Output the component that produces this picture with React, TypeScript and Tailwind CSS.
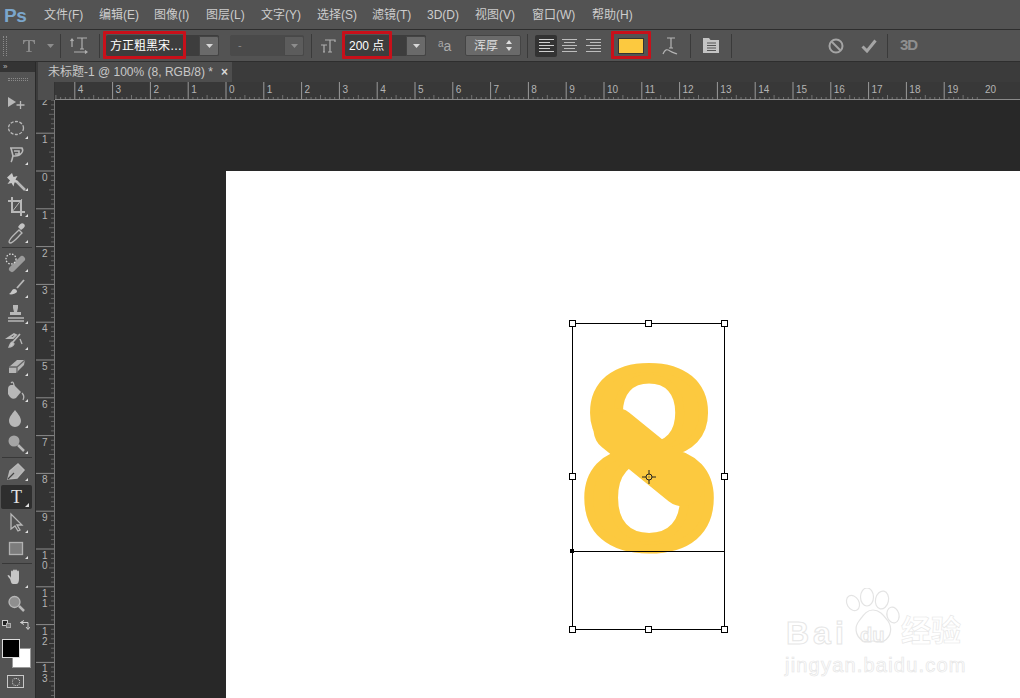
import type { ReactNode } from "react";

const menus = [
  { label: "文件(F)", w: "w-[55px]" },
  { label: "编辑(E)", w: "w-[55px]" },
  { label: "图像(I)", w: "w-[52px]" },
  { label: "图层(L)", w: "w-[55px]" },
  { label: "文字(Y)", w: "w-[56px]" },
  { label: "选择(S)", w: "w-[55px]" },
  { label: "滤镜(T)", w: "w-[55px]" },
  { label: "3D(D)", w: "w-[48px]" },
  { label: "视图(V)", w: "w-[57px]" },
  { label: "窗口(W)", w: "w-[60px]" },
  { label: "帮助(H)", w: "w-[50px]" },
];

const hLabels = ["4", "3", "2", "1", "0", ...Array.from({ length: 20 }, (_, i) => String(i + 1))];
const vLabels = ["2", "1", "0", ...Array.from({ length: 13 }, (_, i) => String(i + 1))];

function Sep({ className }: { className: string }) {
  return <div className={`w-px h-[24px] bg-[#3a3a3a] shrink-0 ${className}`} />;
}

function Caret() {
  return (
    <svg width="7" height="4" viewBox="0 0 7 4" className="shrink-0">
      <path d="M0 0h7L3.5 4z" fill="#d8d8d8" />
    </svg>
  );
}

function DropButton() {
  return (
    <div className="w-[20px] h-[20px] flex items-center justify-center bg-[#6a6a6a] rounded-r-[2px] border border-[#444]">
      <Caret />
    </div>
  );
}

function Tool({ children, corner = true }: { children: ReactNode; corner?: boolean }) {
  return (
    <div className="h-[26px] w-[36px] shrink-0">
      <svg width="36" height="26" viewBox="0 0 36 26" fill="none" stroke="#b8b8b8" strokeWidth="1.3">
        {children}
        {corner && <path d="M25 23h3v-3z" fill="#e0e0e0" stroke="none" />}
      </svg>
    </div>
  );
}

function ToolSep({ className }: { className: string }) {
  return (
    <div className={`shrink-0 flex items-center ${className}`}>
      <div className="h-px w-[30px] ml-[2px] bg-[#383838]" />
    </div>
  );
}

function Handle({ className }: { className: string }) {
  return <div className={`absolute w-[7px] h-[7px] bg-white border border-black ${className}`} />;
}

function HRuler() {
  return (
    <div className="relative h-[18px] flex-1 bg-[#383838] overflow-hidden border-b border-[#8a8a8a] flex">
      <svg width="965" height="18" className="absolute left-0 top-0">
        {Array.from({ length: 200 }, (_, i) => {
          const x = 19.8 - 37.8 + i * 4.725;
          const major = i % 8 === 0;
          const mid = i % 4 === 0;
          return <line key={i} x1={x} x2={x} y1={major ? 0 : mid ? 13 : 15} y2={17} stroke={major ? "#9a9a9a" : "#727272"} strokeWidth="1" />;
        })}
      </svg>
      <div className="w-[19.8px] shrink-0" />
      {hLabels.map((l, i) => (
        <div key={i} className="w-[37.8px] shrink-0 pl-[3px] pt-[2px] text-[10px] leading-[11px] text-[#b4b4b4] relative">
          {l}
        </div>
      ))}
    </div>
  );
}

function VRuler() {
  return (
    <div className="relative w-[19px] shrink-0 bg-[#333333] overflow-hidden border-r border-[#777]">
      <svg width="19" height="600" className="absolute left-0 top-0">
        {Array.from({ length: 130 }, (_, i) => {
          const y = 71 - 75.6 + i * 4.725;
          const major = i % 8 === 0;
          const mid = i % 4 === 0;
          return <line key={i} x1={major ? 0 : mid ? 13 : 15} x2={19} y1={y} y2={y} stroke={major ? "#8c8c8c" : "#666666"} strokeWidth="1" />;
        })}
      </svg>
      <div className="-mt-[4.6px] flex flex-col">
        {vLabels.map((l, i) => (
          <div key={i} className="h-[37.8px] shrink-0 pl-[6px] pt-[2px] text-[10px] leading-[10px] text-[#b4b4b4] relative">
            {l.split("").map((d, j) => (
              <div key={j}>{d}</div>
            ))}
          </div>
        ))}
      </div>
    </div>
  );
}

function Watermark() {
  return (
    <div className="absolute left-[557px] top-[417px] w-[190px] h-[92px] text-transparent font-bold [-webkit-text-stroke:1px_#e6e6e6] font-['Liberation_Sans','Noto_Sans_CJK_SC',sans-serif]">
      <svg width="110" height="62" viewBox="0 0 110 62" fill="none" stroke="#e4e4e4" strokeWidth="1.2" className="absolute left-[52px] top-0">
        <ellipse cx="18" cy="15" rx="6" ry="8" transform="rotate(-30 18 15)" />
        <ellipse cx="32" cy="9" rx="6.500" ry="9" />
        <ellipse cx="47" cy="12" rx="6.500" ry="9" transform="rotate(12 47 12)" />
        <ellipse cx="58" cy="27" rx="6" ry="8" transform="rotate(-15 58 27)" />
        <path d="M38 22c-7 0-10 6-14 11-4 5-5 14 4 20 5 2 6 0 10 0s6 2 11 0c8-5 8-14 4-20-4-5-8-11-15-11z" />
      </svg>
      <div className="absolute left-[3px] top-[29px] text-[32px] leading-[32px] tracking-[4px]">Bai</div>
      <div className="absolute left-[77px] top-[37px] text-[20px] leading-[20px]">du</div>
      <div className="absolute left-[118px] top-[27px] text-[30px] leading-[32px] [-webkit-text-stroke:0.6px_#e6e6e6]">经验</div>
      <div className="absolute left-[2px] top-[65px] text-[20px] leading-[24px] font-normal tracking-[1.2px] [-webkit-text-stroke:0.7px_#e6e6e6]">jingyan.baidu.com</div>
    </div>
  );
}

export default function App() {
  return (
    <div className="relative w-[1020px] h-[698px] overflow-hidden flex flex-col bg-[#535353] text-[#cfcfcf] font-['Liberation_Sans','Noto_Sans_CJK_SC',sans-serif]">
      {/* menu bar */}
      <div className="h-[28px] shrink-0 flex items-center pt-px border-b border-[#2e2e2e] box-content">
        <div className="w-[44px] pl-[4px] text-[19px] leading-none font-bold tracking-[-0.5px] text-[#7ba6cc]">Ps</div>
        {menus.map((m) => (
          <div key={m.label} className={`${m.w} shrink-0 text-[12px] text-[#cdcdcd]`}>
            {m.label}
          </div>
        ))}
      </div>

      {/* options bar */}
      <div className="h-[32px] shrink-0 flex items-center border-b border-[#2e2e2e] bg-[#535353]">
        <div className="ml-[3px] w-[4px] h-[20px] border-x border-dotted border-[#8a8a8a]" />
        <svg width="14" height="14" viewBox="0 0 14 14" className="ml-[15px] shrink-0" fill="#8a8a8a">
          <path d="M1 1h12v4h-1c0-2-1-3-3-3H8v10l2 .5V13H4v-.5L6 12V2H5C3 2 2 3 2 5H1z" />
        </svg>
        <svg width="7" height="4" viewBox="0 0 7 4" className="ml-[11px] shrink-0"><path d="M0 0h7L3.5 4z" fill="#8d8d8d" /></svg>
        <Sep className="ml-[6px]" />
        <svg width="18" height="20" viewBox="0 0 18 20" className="ml-[9px] shrink-0" fill="none" stroke="#b0b0b0">
          <path d="M7 2h10M12 2v11M10 13h4M2 3v8M0.5 5 2 3l1.5 2M4 16h13M15 14.500l2 1.500-2 1.500" strokeWidth="1.2" />
        </svg>
        <Sep className="ml-[11px]" />
        {/* font family */}
        <div className="relative ml-[6px] w-[113px] h-[21px] flex items-center bg-[#3d3d3d] rounded-[2px]">
          <div className="flex-1 pl-[4px] text-[12px] text-white whitespace-nowrap">方正粗黑宋…</div>
          <DropButton />
        </div>
        {/* font style */}
        <div className="ml-[11px] w-[74px] h-[21px] flex items-center bg-[#4a4a4a] rounded-[2px]">
          <div className="flex-1 pl-[8px] text-[11px] text-[#8a8a8a]">-</div>
          <div className="w-[20px] h-[20px] flex items-center justify-center bg-[#5c5c5c] rounded-r-[2px] border border-[#484848]">
            <svg width="7" height="4" viewBox="0 0 7 4"><path d="M0 0h7L3.5 4z" fill="#8d8d8d" /></svg>
          </div>
        </div>
        <Sep className="ml-[7px]" />
        <svg width="16" height="16" viewBox="0 0 16 16" className="ml-[8px] shrink-0" fill="none" stroke="#b0b0b0" strokeWidth="1.2">
          <path d="M5 2h10v2M10 2v12M8 14h4M1 7h6M4 7v7M3 14h2" />
        </svg>
        {/* font size */}
        <div className="ml-[9px] w-[81px] h-[21px] flex items-center bg-[#3d3d3d] rounded-[2px]">
          <div className="flex-1 pl-[4px] text-[12px] text-white">200 点</div>
          <DropButton />
        </div>
        <div className="ml-[12px] w-[16px] text-[14px] leading-none text-[#aaa] whitespace-nowrap">
          <span className="text-[10px] align-[4px]">a</span>a
        </div>
        <div className="ml-[11px] w-[56px] h-[21px] flex items-center justify-between px-[8px] bg-[#6a6a6a] border border-[#444] rounded-[2px] text-[12px] text-[#e0e0e0]">
          <span>浑厚</span>
          <svg width="6" height="11" viewBox="0 0 6 11"><path d="M0 4l3-4 3 4zM0 7l3 4 3-4z" fill="#dedede" /></svg>
        </div>
        <Sep className="ml-[6px]" />
        {/* align */}
        <div className="ml-[7px] w-[22px] h-[22px] bg-[#333333] rounded-[2px] flex items-center justify-center">
          <svg width="15" height="14" viewBox="0 0 15 14" stroke="#cfcfcf"><path d="M0 .5h15M0 3.500h11M0 6.500h15M0 9.500h11M0 12.500h15" /></svg>
        </div>
        <svg width="15" height="14" viewBox="0 0 15 14" stroke="#bdbdbd" className="ml-[5px] shrink-0"><path d="M0 .5h15M2 3.500h11M0 6.500h15M2 9.500h11M0 12.500h15" /></svg>
        <svg width="15" height="14" viewBox="0 0 15 14" stroke="#bdbdbd" className="ml-[9px] shrink-0"><path d="M0 .5h15M4 3.500h11M0 6.500h15M4 9.500h11M0 12.500h15" /></svg>
        {/* colour swatch */}
        <div className="ml-[17px] w-[26px] h-[16px] bg-[#fcc93f] border border-[#333] shrink-0" />
        <svg width="16" height="20" viewBox="0 0 16 20" className="ml-[18px] shrink-0" fill="none" stroke="#b5b5b5" strokeWidth="1.2">
          <path d="M5 2h8M9 2v10M7 12h4M1 18c2-5 4-5 7-3 3 2 5 2 7 3" />
        </svg>
        <Sep className="ml-[12px]" />
        <svg width="16" height="15" viewBox="0 0 16 15" className="ml-[12px] shrink-0">
          <path d="M0 0h6l1.500 2H16v13H0z" fill="#c4c4c4" />
          <path d="M4 5h9M4 7.500h9M4 10h9M4 12.500h9" stroke="#555" />
        </svg>
        <Sep className="ml-[12px]" />
        <svg width="16" height="16" viewBox="0 0 16 16" className="ml-[96px] shrink-0" fill="none" stroke="#a5a5a5" strokeWidth="2">
          <circle cx="8" cy="8" r="6.500" />
          <path d="M3.500 3.500l9 9" />
        </svg>
        <svg width="16" height="14" viewBox="0 0 16 14" className="ml-[17px] shrink-0" fill="none" stroke="#a5a5a5" strokeWidth="3">
          <path d="M1.500 7.500 6 12 14.500 1.500" />
        </svg>
        <Sep className="ml-[10px]" />
        <div className="ml-[12px] text-[15px] font-bold text-[#8f8f8f] tracking-[-1px]">3D</div>
      </div>

      <div className="flex-1 flex min-h-0">
        {/* tool column */}
        <div className="w-[36px] shrink-0 flex flex-col border-r border-[#2a2a2a] bg-[#535353] overflow-hidden">
          <div className="h-[10px] shrink-0 bg-[#343434] text-[8px] leading-[9px] pl-[3px] text-[#bbb]">»</div>
          <div className="h-[18px] shrink-0 flex justify-center pt-[6px]">
            <div className="w-[20px] h-[3px] border-y border-dotted border-[#8a8a8a]" />
          </div>
          <Tool corner={false}>
            <path d="M8 7l8 5-8 5z" fill="#b8b8b8" stroke="none" />
            <path d="M20.500 11v8M16.500 15h8" />
          </Tool>
          <Tool>
            <ellipse cx="16" cy="12" rx="7.500" ry="6.500" strokeDasharray="3 1.500" />
          </Tool>
          <Tool>
            <path d="M10 6h12c2 3-1 8-7 8h-2c-1 3-1 5-2 6M11 6l2 8M14 9h5v3h-4" strokeWidth="1.600" />
          </Tool>
          <Tool>
            <path d="M16 13l9 9" strokeWidth="2.500" />
            <path d="M12 5l1.500 4 4-1-2 3.500 3 2.500-4 .5-1 4-2-3.500-4 1 2.500-3.500-3-3z" fill="#c8c8c8" stroke="none" />
          </Tool>
          <Tool>
            <path d="M12 3v15h13M8 7h13v15" strokeWidth="2" />
            <path d="M12 18 22 5" strokeWidth="1" />
          </Tool>
          <Tool>
            <path d="M9 22c0-3 3-5 10-12l3 3c-7 7-9 10-12 10z" />
            <path d="M18 7c2-3 4-5 6-3s0 4-3 6z" fill="#c4c4c4" stroke="none" />
          </Tool>
          <ToolSep className="h-[3px]" />
          <Tool>
            <path d="M12 20l10-10" strokeWidth="6" strokeLinecap="round" stroke="#9b9b9b" />
            <circle cx="11" cy="10" r="5" strokeDasharray="1.500 1.500" stroke="#dcdcdc" />
          </Tool>
          <Tool>
            <path d="M17 13 24 5" strokeWidth="1.800" />
            <path d="M9 19c2 1 6 0 8-2 0-2-1-3-3-3-2 0-2 3-5 5z" fill="#c8c8c8" stroke="none" />
          </Tool>
          <Tool>
            <path d="M13 4h5v3l-1 4h4v3H10v-3h4l-1-4z" fill="#b8b8b8" stroke="none" />
            <path d="M8 17h16M8 20h16" strokeWidth="1.500" />
          </Tool>
          <Tool>
            <path d="M8 11l6-4 2 1-3 3zM20 7l-8 9" strokeWidth="1.800" />
            <path d="M9 20c2 0 4-1 5-3l-2-2c-2 1-2 3-3 5zM20 12l2 5" fill="#c8c8c8" />
          </Tool>
          <Tool>
            <path d="M9 14l8-7h8l-1 5-8 8H9z" fill="#b5b5b5" stroke="none" />
            <path d="M9 14h8l8-7M17 14v6" stroke="#666" />
          </Tool>
          <Tool>
            <path d="M8 15V10c0-3 2-4 3-4h3l7 7-5 6c-3 2-6 0-8-4z" fill="#b8b8b8" stroke="none" />
            <path d="M11 4c2-2 3 0 3 4M22 14c2 2 2 5 1 7" />
          </Tool>
          <Tool>
            <path d="M15 5c3 4 6 7 6 11a6 6 0 0 1-12 0c0-4 3-7 6-11z" fill="#b8b8b8" stroke="none" />
          </Tool>
          <Tool>
            <circle cx="14" cy="10" r="5.500" fill="#a5a5a5" stroke="none" />
            <path d="M18 14l6 6" strokeWidth="2.500" />
          </Tool>
          <ToolSep className="h-px" />
          <Tool>
            <path d="M8 21l2-8 8-7 6 6-7 8zM8 21l6-6" strokeWidth="1.500" fill="#b0b0b0" />
            <path d="M8 21l6-6" stroke="#444" />
          </Tool>
          <div className="h-[24px] shrink-0 mt-[1px] mb-[1px] w-[31px] ml-[1px] bg-[#2e2e2e] rounded-[2px] flex items-center justify-center text-[18px] leading-none font-['Liberation_Serif',serif] text-[#e4e4e4] relative">
            T
            <svg width="4" height="4" viewBox="0 0 4 4" className="absolute right-[3px] bottom-[2px]"><path d="M0 4h4V0z" fill="#e0e0e0" /></svg>
          </div>
          <Tool>
            <path d="M11 4v15l4-3 3 5 2-1-3-5h5z" />
          </Tool>
          <Tool>
            <rect x="9.500" y="6.500" width="13" height="12" fill="#7c7c7c" stroke="#b2b2b2" />
          </Tool>
          <ToolSep className="h-[3px]" />
          <Tool>
            <path d="M10 14c-2-2-3-4-2-4 2 0 3 3 3 3V7c0-2 2-2 2 0V6c0-2 2-2 2 0v0c0-2 2-2 2 0v1c0-2 2-2 2 0v7c0 3-1 5-3 5h-3c-2 0-2-3-3-5z" fill="#c6c6c6" stroke="none" />
          </Tool>
          <Tool corner={false}>
            <circle cx="14.500" cy="11" r="5.500" fill="#8f8f8f" />
            <path d="M19 15l5 5" strokeWidth="2.500" />
          </Tool>
          {/* default + swap colours */}
          <div className="h-[12px] shrink-0 mt-[2px] relative">
            <div className="absolute left-[2px] top-[1px] w-[6px] h-[6px] border border-[#ccc] bg-[#222]" />
            <div className="absolute left-[6px] top-[4px] w-[5px] h-[5px] border border-[#aaa] bg-[#777]" />
            <svg width="11" height="11" viewBox="0 0 11 11" className="absolute left-[19px] top-0" fill="none" stroke="#d0d0d0">
              <path d="M5 1.500 1.500 3.500 5 5.500M1.500 3.500H9V10M7 8l2 2.500 2-2.500" />
            </svg>
          </div>
          {/* fg / bg swatches */}
          <div className="relative h-[30px] shrink-0 mt-[8px]">
            <div className="absolute left-[12px] top-[9px] w-[19px] h-[20px] bg-white border border-[#999]" />
            <div className="absolute left-[2px] top-0 w-[18px] h-[19px] bg-black border border-[#ddd]" />
          </div>
          <div className="mt-[6px] shrink-0 ml-[7px] w-[17px] h-[13px] border border-[#c8c8c8] flex items-center justify-center">
            <div className="w-[8px] h-[8px] rounded-full border border-dotted border-[#dedede]" />
          </div>
        </div>

        <div className="flex-1 min-w-0 flex flex-col">
          {/* tab row */}
          <div className="h-[20px] shrink-0 bg-[#3b3b3b] flex pl-[2px]">
            <div className="w-[194px] h-full bg-[#4e4e4e] flex items-center pl-[10px] text-[12px] text-[#c8c8c8] whitespace-nowrap">
              未标题-1 @ 100% (8, RGB/8) *
              <span className="ml-[8px] text-[12px] font-bold leading-none text-[#d8d8d8]">×</span>
            </div>
          </div>
          {/* top ruler */}
          <div className="h-[18px] shrink-0 flex">
            <div className="w-[19px] shrink-0 flex">
              <div className="w-[2px] bg-[#3b3b3b]" />
              <div className="flex-1 bg-[#4e4e4e] border-r border-[#333]" />
            </div>
            <HRuler />
          </div>
          <div className="flex-1 flex min-h-0">
            <VRuler />
            {/* pasteboard */}
            <div className="flex-1 bg-[#282828] pl-[171px] pt-[71px] overflow-hidden">
              <div className="relative w-[900px] h-[600px] bg-white">
                <div className="absolute left-[343px] top-[172px] w-[160px] text-center text-[240px] leading-[240px] font-normal text-[#fcc93f] [-webkit-text-stroke:9px_#fcc93f] font-['DejaVu_Serif',serif] select-none">
                  8
                </div>
                <div className="absolute left-[358px] top-[264px] w-[130px] h-[44px] rounded-full bg-[#fcc93f] rotate-[39deg]" />
                {/* transform box */}
                <div className="absolute left-[346px] top-[152px] w-[153px] h-[307px] border border-black">
                  <div className="absolute left-0 right-0 top-[227px] h-px bg-black" />
                  <div className="absolute left-[-3px] top-[225px] w-[4px] h-[4px] bg-black" />
                  <Handle className="left-[-4px] top-[-4px]" />
                  <Handle className="left-[72px] top-[-4px]" />
                  <Handle className="right-[-4px] top-[-4px]" />
                  <Handle className="left-[-4px] top-[149px]" />
                  <Handle className="right-[-4px] top-[149px]" />
                  <Handle className="left-[-4px] bottom-[-4px]" />
                  <Handle className="left-[72px] bottom-[-4px]" />
                  <Handle className="right-[-4px] bottom-[-4px]" />
                  <svg width="14" height="14" viewBox="0 0 14 14" className="absolute left-[69px] top-[146px]" fill="none" stroke="#222">
                    <circle cx="7" cy="7" r="3" />
                    <path d="M7 0v4M7 10v4M0 7h4M10 7h4" />
                    <path d="M6.500 7h1" />
                  </svg>
                </div>
                <Watermark />
              </div>
            </div>
          </div>
        </div>
      </div>

      {/* red annotation boxes */}
      <div className="absolute left-[103px] top-[31px] w-[83px] h-[28px] border-[3px] border-[#c8101a] rounded-[1px]" />
      <div className="absolute left-[342px] top-[31px] w-[50px] h-[28px] border-[3px] border-[#c8101a] rounded-[1px]" />
      <div className="absolute left-[611px] top-[31px] w-[40px] h-[28px] border-[3px] border-[#c8101a] rounded-[1px]" />
    </div>
  );
}
